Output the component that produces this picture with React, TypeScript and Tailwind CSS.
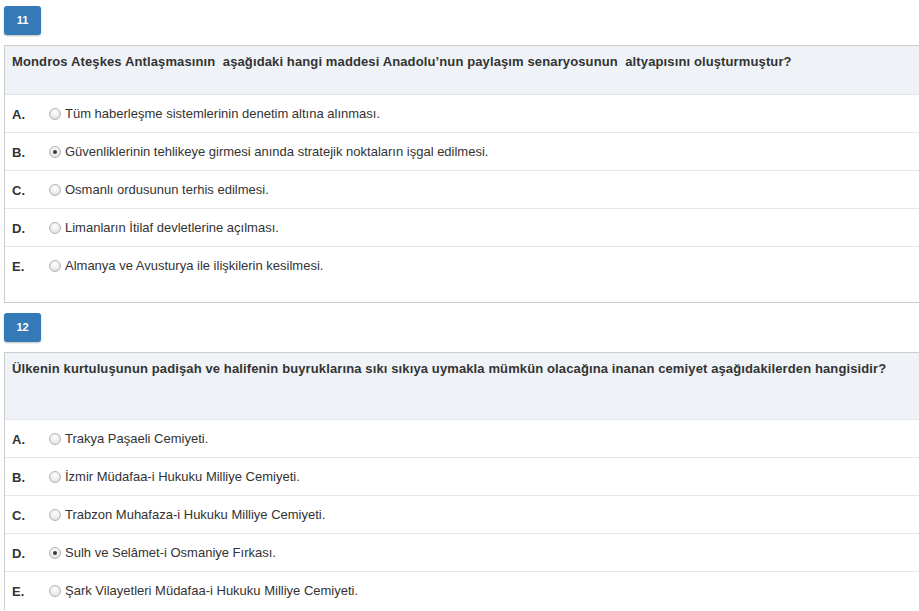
import React from 'react';

interface Question {
  no: number;
  text: string;
  headerH: string;
  options: string[];
  selected: number;
}

const questions: Question[] = [
  {
    no: 11,
    text: 'Mondros Ateşkes Antlaşmasının  aşağıdaki hangi maddesi Anadolu’nun paylaşım senaryosunun  altyapısını oluşturmuştur?',
    headerH: 'h-[49px]',
    options: [
      'Tüm haberleşme sistemlerinin denetim altına alınması.',
      'Güvenliklerinin tehlikeye girmesi anında stratejik noktaların işgal edilmesi.',
      'Osmanlı ordusunun terhis edilmesi.',
      'Limanların İtilaf devletlerine açılması.',
      'Almanya ve Avusturya ile ilişkilerin kesilmesi.',
    ],
    selected: 1,
  },
  {
    no: 12,
    text: 'Ülkenin kurtuluşunun padişah ve halifenin buyruklarına sıkı sıkıya uymakla mümkün olacağına inanan cemiyet aşağıdakilerden hangisidir?',
    headerH: 'h-[67px]',
    options: [
      'Trakya Paşaeli Cemiyeti.',
      'İzmir Müdafaa-i Hukuku Milliye Cemiyeti.',
      'Trabzon Muhafaza-i Hukuku Milliye Cemiyeti.',
      'Sulh ve Selâmet-i Osmaniye Fırkası.',
      'Şark Vilayetleri Müdafaa-i Hukuku Milliye Cemiyeti.',
    ],
    selected: 3,
  },
];

const letters = ['A.', 'B.', 'C.', 'D.', 'E.'];

function Radio({ checked }: { checked: boolean }) {
  return (
    <span className="relative flex h-[12px] w-[12px] shrink-0 items-center justify-center rounded-full border border-[#b5b5b5] bg-[radial-gradient(circle_at_50%_35%,#ffffff_0%,#e9e9e9_60%,#d4d4d4_100%)]">
      {checked && <span className="h-[4px] w-[4px] rounded-full bg-[#3a3a3a]" />}
    </span>
  );
}

function QuestionBlock({ q, last }: { q: Question; last: boolean }) {
  return (
    <div>
      <div className="flex h-[29px] w-[37px] items-center justify-center rounded-[3px] bg-[#337ab7] text-[11px] font-bold text-white shadow-[0_1px_2px_rgba(0,0,0,0.25)]">
        {q.no}
      </div>
      <div className={`mt-[10px] w-[960px] border border-[#cccccc] ${last ? 'border-b-0' : ''}`}>
        <div className={`${q.headerH} border-b border-[#e3e6ea] bg-[#eff3f7] px-[7px] pt-[6px] text-[13px] leading-[20px] font-bold tracking-[0.12px] text-[#333]`}>
          <span className="whitespace-pre">{q.text}</span>
        </div>
        {q.options.map((opt, i) => (
          <div
            key={i}
            className={`flex h-[38px] items-center ${i < q.options.length - 1 ? 'border-b border-[#e6e6e6]' : ''}`}
          >
            <span className="w-[44px] shrink-0 pl-[7px] pt-[2px] text-[13px] font-bold text-[#333]">{letters[i]}</span>
            <Radio checked={i === q.selected} />
            <span className="pl-[4px] text-[13px] text-[#333]">{opt}</span>
          </div>
        ))}
        {!last && <div className="h-[17px]" />}
      </div>
    </div>
  );
}

export default function App() {
  return (
    <div className="h-[611px] w-[919px] overflow-hidden bg-white pl-[4px] pt-[6px] font-['Liberation_Sans',Arial,sans-serif]">
      <div className="flex flex-col gap-[10px]">
        {questions.map((q, i) => (
          <QuestionBlock key={q.no} q={q} last={i === questions.length - 1} />
        ))}
      </div>
    </div>
  );
}
